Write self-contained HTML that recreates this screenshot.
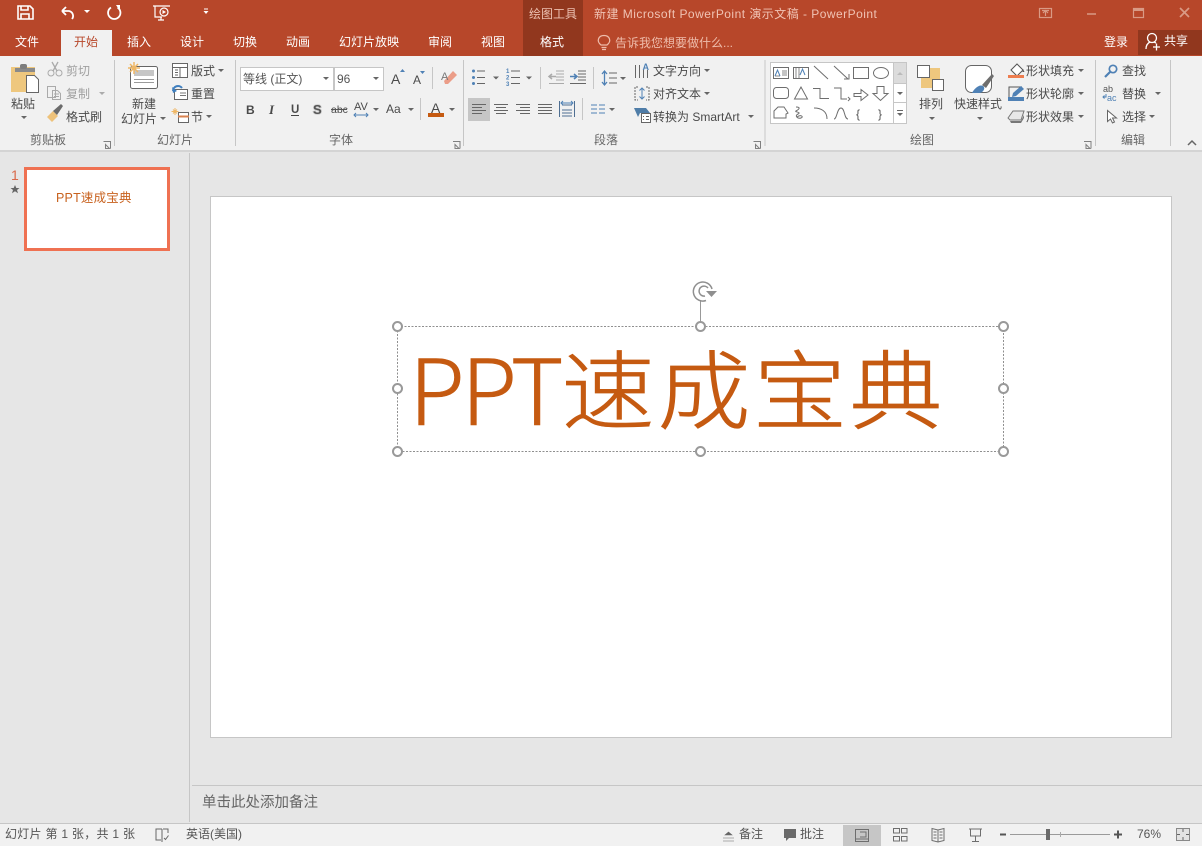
<!DOCTYPE html>
<html lang="zh"><head><meta charset="utf-8"><title>PowerPoint</title>
<style>
html,body{margin:0;padding:0;background:#e6e6e6;width:1202px;height:846px;overflow:hidden}
svg{display:block;font-family:"Liberation Sans","Noto Sans CJK SC",sans-serif}
text{font-size:12px;fill:#4a4a4a}
.w text,text.w{fill:#fff}
.d{fill:#a0a0a0}
.l{fill:#666}
.g{fill:none;stroke:#6e6e6e;stroke-width:1}
.sep{stroke:#c6c6c6;stroke-width:1}
</style></head><body>
<svg width="1202" height="846" viewBox="0 0 1202 846" xmlns="http://www.w3.org/2000/svg">
<defs>
<path id="a" d="M-3 0h6l-3 3z" fill="#666"/>
<path id="la" d="M0 0h7v7M2 3v4h4l-4-4z" fill="none" stroke="#808080"/>
</defs>

<!-- backgrounds -->
<rect width="1202" height="846" fill="#e6e6e6"/>
<rect width="1202" height="56" fill="#b7472a"/>
<rect x="523" width="60" height="56" fill="#91371e"/>
<rect x="1138" y="30" width="64" height="25" fill="#91371e"/>
<rect y="56" width="1202" height="94" fill="#f1f1f1"/>
<rect x="61" y="30" width="51" height="26" fill="#f1f1f1"/>
<rect y="150" width="1202" height="2" fill="#d4d4d4"/>

<!-- QAT -->
<g fill="none" stroke="#fff" stroke-width="1.6">
<path d="M18 6h12l3 3v10H18z"/><path d="M21 6v4h7V6M21 19v-5h8v5"/>
<path d="M62 11l4-4M62 11l4 4M62 11h7a5 5 0 0 1 3 8" stroke-width="1.8"/>
<path d="M111 7.500a6.200 6.200 0 1 0 6.500 0" stroke-width="1.800"/>
<path d="M153 6h17M155 6v11h7M161 17v3M158 20h6" stroke-width="1.2"/><circle cx="164" cy="12" r="4" stroke-width="1.2"/>
</g>
<path d="M116 5h4v6z" fill="#fff"/>
<path d="M162.500 10l3.500 2-3.500 2z" fill="#fff"/>
<path d="M84 10h6l-3 3z M203.500 11h5l-2.500 3zM204 8.500h4v1h-4z" fill="#fff"/>

<!-- Window controls -->
<g fill="none" stroke="#d99a85" stroke-width="1.200">
<rect x="1039.500" y="8.500" width="12" height="9"/><path d="M1045.500 16v-5M1043 13l2.500-2.500 2.500 2.500M1042 10.500h7"/>
<path d="M1087 14h9" stroke-width="1.500"/>
<rect x="1133.500" y="8.500" width="10" height="9"/><path d="M1133 10h11" stroke-width="2"/>
<path d="M1180 8l9 9M1189 8l-9 9" stroke-width="1.700"/>
</g>

<!-- Title -->
<text x="529" y="18" style="font-size:12px;fill:#ecc0b1">绘图工具</text>
<text x="594" y="18" style="font-size:12px;fill:#f0c3b4;letter-spacing:.47px">新建 Microsoft PowerPoint 演示文稿 - PowerPoint</text>

<!-- Tabs -->
<g class="w">
<text x="15" y="46">文件</text><text x="127" y="46">插入</text><text x="180" y="46">设计</text><text x="233" y="46">切换</text><text x="286" y="46">动画</text><text x="339" y="46">幻灯片放映</text><text x="428" y="46">审阅</text><text x="481" y="46">视图</text><text x="540" y="46">格式</text>
<text x="1104" y="46">登录</text><text x="1164" y="45">共享</text>
</g>
<text x="74" y="46" style="fill:#b7472a">开始</text>
<path d="M601.500 47.500h5M602 49.500h4M601 45c-5-4-2.500-9.500 3-9.500s8 5.500 3 9.500z" fill="none" stroke="#eebcab" stroke-width="1.200"/>
<text x="615" y="47" style="fill:#eebcab">告诉我您想要做什么...</text>
<g fill="none" stroke="#fff" stroke-width="1.300"><circle cx="1152" cy="38" r="4.500"/><path d="M1146 49c0-4 2-6 4-7M1154 42l2 1M1153 47h7M1156.500 43.500v7"/></g>

<!-- Separators -->
<g class="sep">
<path d="M114.500 60v86M235.500 60v86M463.500 60v86M765 60v86M1095.500 60v86M1170.500 60v86"/>
<path d="M432.500 67v22M420.500 98v22M540.500 67v22M593.500 67v22M582.500 98v22"/>
</g>

<!-- Clipboard group -->
<rect x="11" y="67" width="24" height="25" fill="#eec77e"/>
<path d="M16 69h20v4H16z" fill="#8a8a8a" transform="translate(-1 -1)"/><rect x="20" y="64" width="7" height="5" rx="2" fill="#7d7d7d"/>
<path d="M26.500 75.500h8l4 4v13h-12z" fill="#fff" stroke="#666"/>
<text x="11" y="108">粘贴</text><use href="#a" x="24" y="116"/>
<g class="g" style="stroke:#aaa"><circle cx="51" cy="73" r="3"/><circle cx="59" cy="73" r="3"/><path d="M53 71l5-9M57 71l-5-9" stroke-width="1.300"/>
<rect x="47.500" y="86.500" width="8" height="11"/><path d="M52.500 90.500h5l3 3v6h-8zM54 94h5M54 96.500h5"/></g>
<text x="66" y="75" class="d">剪切</text><text x="66" y="98" class="d">复制</text>
<use href="#a" x="102" y="92" style="opacity:.5"/>
<path d="M47 117l6-6 5 5-6 6z" fill="#eec27a"/><path d="M53 111l8-7 2 2-6 9z" fill="#6b6b6b"/>
<text x="66" y="121">格式刷</text>
<text x="30" y="144" class="l">剪贴板</text>
<use href="#la" x="103.500" y="141.500"/>

<!-- Slides group -->
<rect x="130.500" y="66.500" width="27" height="22" rx="2" fill="#fff" stroke="#666"/>
<rect x="134" y="70" width="20" height="6" fill="#c6c6c6"/><path d="M134 79.500h20M134 82.500h20" stroke="#9a9a9a"/>
<g stroke="#efb765" stroke-width="1.500"><path d="M134 62v12M128 68h12M130 64l8 8M138 64l-8 8"/></g>
<text x="132" y="108">新建</text><text x="121" y="123">幻灯片</text><use href="#a" x="163" y="117"/>
<rect x="172.500" y="63.500" width="15" height="14" fill="#fff" stroke="#666"/><path d="M173 67.500h14M180 68v9M175 70h3M175 72.500h3M175 75h3" stroke="#666" fill="none"/>
<text x="191" y="75">版式</text><use href="#a" x="221" y="69"/>
<rect x="174.500" y="89.500" width="13" height="10" fill="#fff" stroke="#666"/><path d="M180 93h6M180 95.500h6" stroke="#777"/>
<path d="M173 91a5 5 0 0 1 9-3" fill="none" stroke="#3f7fbf" stroke-width="2"/><path d="M172 87l1 6 4-2z" fill="#3f7fbf"/>
<text x="191" y="98">重置</text>
<rect x="178.500" y="112.500" width="10" height="10" fill="#fff" stroke="#666"/><path d="M178 116.500h11" stroke="#d9824f" stroke-width="2"/>
<path d="M175 108v7M171.500 111.500h7M173 109.500l4 4M177 109.500l-4 4" stroke="#efb765"/>
<text x="191" y="121">节</text><use href="#a" x="209" y="115"/>
<text x="157" y="144" class="l">幻灯片</text>

<!-- Font group -->
<rect x="240.500" y="67.500" width="93" height="23" fill="#fff" stroke="#c6c6c6"/>
<rect x="334.500" y="67.500" width="49" height="23" fill="#fff" stroke="#c6c6c6"/>
<text x="243" y="83" style="fill:#555">等线 (正文)</text><text x="337" y="83" style="fill:#555">96</text>
<use href="#a" x="326" y="77"/><use href="#a" x="376" y="77"/>
<text x="391" y="84" style="font-size:14px">A</text><path d="M400 72l2.500-3 2.500 3z" fill="#4f81b5"/>
<text x="413" y="84" style="font-size:12px">A</text><path d="M420 71h5l-2.500 3z" fill="#4f81b5"/>
<path d="M444 81l9-10 4 4-9 9h-3z" fill="#eb9d88"/><text x="441" y="80" style="font-size:11px;fill:#777">A</text>
<text x="246" y="114" style="font-weight:700;font-size:12px">B</text>
<text x="269" y="114" style="font-style:italic;font-family:'Liberation Serif',serif;font-size:13px;font-weight:700">I</text>
<text x="291" y="113" style="font-weight:700;font-size:11.500px">U</text>
<text x="313" y="114" style="font-weight:700;font-size:13px;fill:#555;paint-order:stroke;stroke:#ccc;stroke-width:1.500px">S</text>
<path d="M291 115.500h8" stroke="#444"/>
<text x="331" y="113" style="font-size:10.500px">abc</text><path d="M331 109.500h16" stroke="#555"/>
<text x="354" y="110" style="font-size:11px">AV</text><path d="M354 115h14M356 113l-2 2 2 2M366 113l2 2-2 2" fill="none" stroke="#4f81b5"/>
<use href="#a" x="376" y="108"/>
<text x="386" y="113" style="font-size:12px">Aa</text><use href="#a" x="411" y="108"/>
<text x="431" y="113" style="font-size:14px">A</text><rect x="428" y="113" width="16" height="4" fill="#c55a11"/>
<use href="#a" x="452" y="108"/>
<text x="329" y="144" class="l">字体</text>
<use href="#la" x="453" y="141.500"/>

<!-- Paragraph group -->
<g fill="#4f81b5"><circle cx="473.500" cy="71" r="1.500"/><circle cx="473.500" cy="77.500" r="1.500"/><circle cx="473.500" cy="83.500" r="1.500"/></g>
<path d="M477 71h8M477 77.500h8M477 83.500h8M511 71h9M511 77.500h9M511 83.500h9" stroke="#666"/>
<text x="506" y="73" style="font-size:6px;fill:#4f81b5;font-weight:700">1</text><text x="506" y="79.500" style="font-size:6px;fill:#4f81b5;font-weight:700">2</text><text x="506" y="86" style="font-size:6px;fill:#4f81b5;font-weight:700">3</text>
<use href="#a" x="496" y="76.500"/><use href="#a" x="529" y="76.500"/>
<path d="M556 71h8M556 74h8M556 77h8M556 80h8M549 83.500h15" stroke="#aaa"/><path d="M556 76.500h-6M552 74l-3 2.500 3 2.500" fill="none" stroke="#aaa" stroke-width="1.500"/>
<path d="M578 71h8M578 74h8M578 77h8M578 80h8M570 83.500h16" stroke="#666"/><path d="M570 76.500h6M574 74l3 2.500-3 2.500" fill="none" stroke="#4f81b5" stroke-width="1.500"/>
<path d="M604.500 71v14M602 74l2.500-3 2.500 3M602 82l2.500 3 2.500-3" fill="none" stroke="#4f81b5" stroke-width="1.300"/>
<path d="M609 73h8M609 78h8M609 83h8" stroke="#666"/><use href="#a" x="623" y="77"/>
<rect x="468" y="98" width="22" height="23" fill="#c6c6c6"/>
<g stroke="#666"><path d="M472 104.500h14M472 107.500h10M472 110.500h14M472 113.500h10"/><path d="M494 104.500h14M496 107.500h10M494 110.500h14M496 113.500h10"/><path d="M516 104.500h14M520 107.500h10M516 110.500h14M520 113.500h10"/><path d="M538 104.500h14M538 107.500h14M538 110.500h14M538 113.500h14"/></g>
<path d="M559.500 101v16M574.500 101v16M562 105h10M562 110h10M562 113h10M562 116h10" stroke="#4f6f92"/><path d="M561 103h12M563 101l-2 2 2 2M571 101l2 2-2 2" fill="none" stroke="#4f81b5"/>
<path d="M591 105h6M599 105h6M591 109h6M599 109h6M591 113h6M599 113h6" stroke="#4f81b5"/><use href="#a" x="612" y="108"/>
<path d="M635.500 65v13M639.500 65v13M643.500 70v8M647.500 70v8" stroke="#666"/><text x="642.500" y="70" style="font-size:9px;fill:#4f81b5;font-weight:700">A</text>
<text x="653" y="75">文字方向</text><use href="#a" x="707" y="69"/>
<path d="M638 87h-3v13h3M646 87h3v13h-3" fill="none" stroke="#666" stroke-dasharray="2 1"/><path d="M642 88v11M639.500 90.500l2.500-2.500 2.500 2.500M639.500 96.500l2.500 2.500 2.500-2.500" fill="none" stroke="#4f81b5"/>
<text x="653" y="98">对齐文本</text><use href="#a" x="707" y="92"/>
<path d="M634 108h12l4 5h-10l-2 4z" fill="#4f7da8"/><rect x="641.500" y="113.500" width="9" height="9" fill="#fff" stroke="#666"/><path d="M643 116.500h1M646 116.500h3M643 119.500h1M646 119.500h3" stroke="#666"/>
<text x="653" y="121">转换为 SmartArt</text><use href="#a" x="751" y="115"/>
<text x="594" y="144" class="l">段落</text>
<use href="#la" x="753.500" y="141.500"/>

<!-- Drawing gallery -->
<rect x="770.500" y="62.500" width="136" height="61" fill="#fff" stroke="#c6c6c6"/>
<rect x="893" y="63" width="13" height="20" fill="#dcdcdc"/>
<path d="M893.500 62v62M893 83.500h13M893 102.500h13" stroke="#c6c6c6"/>
<path d="M897 75h6l-3-3z" fill="#bbb"/><use href="#a" x="900" y="92"/><path d="M897 110.500h6" stroke="#666"/><use href="#a" x="900" y="113"/>
<g class="g">
<rect x="773.500" y="67.500" width="15" height="11"/><path d="M782 71h5M782 73h5M782 75h5M775 76h5" stroke="#888"/>
<rect x="793.500" y="67.500" width="15" height="11"/><path d="M796 68v10M799 68v10" stroke="#888"/>
<path d="M814 66l14 13M834 66l14 13M849 74v5h-5"/>
<rect x="853.500" y="67.500" width="15" height="11"/><ellipse cx="881" cy="73" rx="7.500" ry="5.500"/>
<rect x="773.500" y="87.500" width="15" height="11" rx="3"/><path d="M801 87l-6.500 12h13zM813 88.500h7v10h9M834 88h7v11h6M848 97l2 2-2 2M854 93.500h7v-4l7 5.500-7 5.500v-4h-7zM877 86.500h7v7h4l-7.500 7-7.500-7h4z"/>
<path d="M778 107h6l4 6-2 1v4h-12v-7zM796 107c6 0 2 3 0 4s6 1 2 3 0 5 3 4 0-4-4-1M814 108c7 0 13 3 13 11M834 119c3 0 3-11 7-11s3 11 7 11"/>
</g>
<text x="856" y="118" style="font-size:12px;fill:#555">{</text><text x="878" y="118" style="font-size:12px;fill:#555">}</text>
<path d="M775 76l2.500-6 2.500 6" fill="none" stroke="#4f81b5"/><path d="M800 75l2.500-6 2.500 6" fill="none" stroke="#4f81b5"/>

<!-- Arrange / style -->
<rect x="921" y="77" width="11" height="11" fill="#eec77e"/><rect x="929" y="68" width="11" height="11" fill="#eec77e"/>
<rect x="917.500" y="65.500" width="12" height="12" fill="#fff" stroke="#666"/>
<rect x="932.500" y="79.500" width="11" height="11" fill="#fff" stroke="#666"/>
<text x="919" y="108">排列</text><use href="#a" x="932" y="117"/>
<rect x="965.500" y="65.500" width="26" height="27" rx="6" fill="#fff" stroke="#666"/>
<path d="M982 85l10-11 2 2-8 12z" fill="#6e6e6e"/><path d="M972 93c2-4 7-9 11-7 3 2 0 7-4 7z" fill="#4f81b5"/>
<text x="954" y="108">快速样式</text><use href="#a" x="980" y="117"/>
<path d="M1011 70l6-6 6 6-6 6z" fill="#fff" stroke="#555"/><rect x="1008" y="75" width="16" height="3" fill="#ed7d4f"/><path d="M1023 69l1.500 3h-2z" fill="#555"/>
<text x="1026" y="75">形状填充</text><use href="#a" x="1081" y="69"/>
<path d="M1022 87h-13v13" fill="none" stroke="#555"/><path d="M1012 97l1-4 8-7 3 3-8 7z" fill="#4f81b5"/><rect x="1008" y="97" width="16" height="4" fill="#4f81b5"/>
<text x="1026" y="98">形状轮廓</text><use href="#a" x="1081" y="92"/>
<path d="M1008 118l5-7h11l-3 9h-11z" fill="#e8e8e8" stroke="#777"/><path d="M1010 121h11l3-6v3l-3 5h-10z" fill="#777"/>
<text x="1026" y="121">形状效果</text><use href="#a" x="1081" y="115"/>
<text x="910" y="144" class="l">绘图</text>
<use href="#la" x="1084" y="141.500"/>

<!-- Editing -->
<circle cx="1113" cy="69" r="3.700" fill="none" stroke="#4f81b5" stroke-width="1.700"/><path d="M1110 72l-5 5" stroke="#4f81b5" stroke-width="2.200"/>
<text x="1122" y="75">查找</text>
<text x="1103" y="92" style="font-size:9px;fill:#555">ab</text><text x="1107" y="101" style="font-size:9px;fill:#4f81b5">ac</text><path d="M1106 94v3h-3M1104.500 95.500l-1.500 1.500 1.500 1.500" fill="none" stroke="#4f81b5"/>
<text x="1122" y="98">替换</text><use href="#a" x="1158" y="92"/>
<path d="M1107.500 110.500v11l3-2.500 2 4 2-1-2-4h4z" fill="#fff" stroke="#666"/>
<text x="1122" y="121">选择</text><use href="#a" x="1152" y="115"/>
<text x="1121" y="144" class="l">编辑</text>
<path d="M1188 145l4-4 4 4" fill="none" stroke="#666" stroke-width="1.500"/>

<!-- Panels -->
<path d="M189.500 153v669" stroke="#c6c6c6"/>
<rect x="192" y="785" width="1010" height="1" fill="#c6c6c6"/>
<text x="202" y="807" style="font-size:14.500px;fill:#666">单击此处添加备注</text>

<!-- Thumbnail -->
<text x="11" y="180" style="font-size:14px;fill:#d9694a">1</text>
<path d="M15 185l1.300 3h3.200l-2.500 2 1 3.200-3-2-3 2 1-3.200-2.500-2h3.200z" fill="#666"/>
<rect x="25.500" y="168.500" width="143" height="81" fill="#fff" stroke="#ef7152" stroke-width="3"/>
<text x="56" y="202" style="font-size:12.500px;fill:#c8621f;letter-spacing:.2px">PPT速成宝典</text>

<!-- Slide -->
<rect x="210.500" y="196.500" width="961" height="541" fill="#fff" stroke="#c6c6c6"/>
<text x="409" y="425" style="font-family:'Noto Sans CJK SC',sans-serif;font-size:91px;font-weight:300;fill:#c55a11;stroke:#c55a11;stroke-width:.6px;letter-spacing:-3.500px">PPT</text>
<text transform="translate(561.500 422) scale(1 .92)" x="0" y="0" style="font-family:'Noto Sans CJK SC',sans-serif;font-size:93px;font-weight:300;fill:#c55a11;stroke:#c55a11;stroke-width:.8px;letter-spacing:3px">速成宝典</text>

<!-- Selection -->
<rect x="397.500" y="326.500" width="606" height="125" fill="none" stroke="#8f8f8f" stroke-dasharray="2 1.500"/>
<path d="M700.500 300v26" stroke="#999"/>
<g fill="#fff" stroke="#999" stroke-width="2">
<circle cx="397.500" cy="326.500" r="4.500"/><circle cx="700.500" cy="326.500" r="4.500"/><circle cx="1003.500" cy="326.500" r="4.500"/>
<circle cx="397.500" cy="388.500" r="4.500"/><circle cx="1003.500" cy="388.500" r="4.500"/>
<circle cx="397.500" cy="451.500" r="4.500"/><circle cx="700.500" cy="451.500" r="4.500"/><circle cx="1003.500" cy="451.500" r="4.500"/>
</g>
<g fill="none" stroke="#8f8f8f" stroke-width="1.500">
<path d="M712 289a9.500 9.500 0 1 0-6 11.500"/><path d="M708 288a5 5 0 1 0-3 8"/>
</g>
<path d="M706 291h11l-5.500 6z" fill="#8f8f8f"/>

<!-- Status bar -->
<rect y="824" width="1202" height="22" fill="#f1f1f1"/>
<rect y="823" width="1202" height="1" fill="#c6c6c6"/>
<rect x="843" y="825" width="38" height="21" fill="#c6c6c6"/>
<text x="5" y="838" style="fill:#555;letter-spacing:.28px">幻灯片 第 1 张，共 1 张</text>
<path d="M162 829h-6v11h5M163 829h5v4M162 829v13M164 838l1.500 1.500 3-4" fill="none" stroke="#666"/>
<text x="186" y="838" style="fill:#555">英语(美国)</text>
<path d="M723 838h11M723 841h11M725 835l3.500-3 3.500 3z" fill="#666" stroke="#666" stroke-width=".6"/>
<text x="739" y="838" style="fill:#555">备注</text>
<path d="M784 829h12v9h-7l-3 3v-3h-2z" fill="#6a6a6a"/>
<text x="800" y="838" style="fill:#555">批注</text>
<g class="g">
<rect x="855.500" y="829.500" width="13" height="12"/><path d="M860 832h6v5h-6M856 839h12"/>
<rect x="893.500" y="828.500" width="6" height="4.500"/><rect x="901.500" y="828.500" width="5.500" height="4.500"/><rect x="893.500" y="836.500" width="6" height="4.500"/><rect x="901.500" y="836.500" width="5.500" height="4.500"/>
<path d="M938 830l-6-1.500v12l6 1.500 6-1.500v-12zM938 830v12M933.500 832h3M933.500 835h3M933.500 838h3M939.500 832h3M939.500 835h3M939.500 838h3"/>
<path d="M969 829h13M970.500 829v7h10v-7M975.500 836v5M972 841.500h7"/>
</g>
<path d="M1000 834.500h6M1114 834.500h8M1118 830.500v8" stroke="#555" stroke-width="2"/>
<path d="M1010 834.500h100" stroke="#9a9a9a"/><path d="M1060.500 832v5" stroke="#aaa"/>
<rect x="1046" y="829" width="4" height="11" fill="#6a6a6a"/>
<text x="1137" y="838" style="fill:#555">76%</text>
<rect x="1176.500" y="828.500" width="13" height="12" fill="#e2e2e2" stroke="#888"/><path d="M1183 829v3M1183 837v3M1177 834.500h3M1186 834.500h3" stroke="#666"/>
</svg>
</body></html>
